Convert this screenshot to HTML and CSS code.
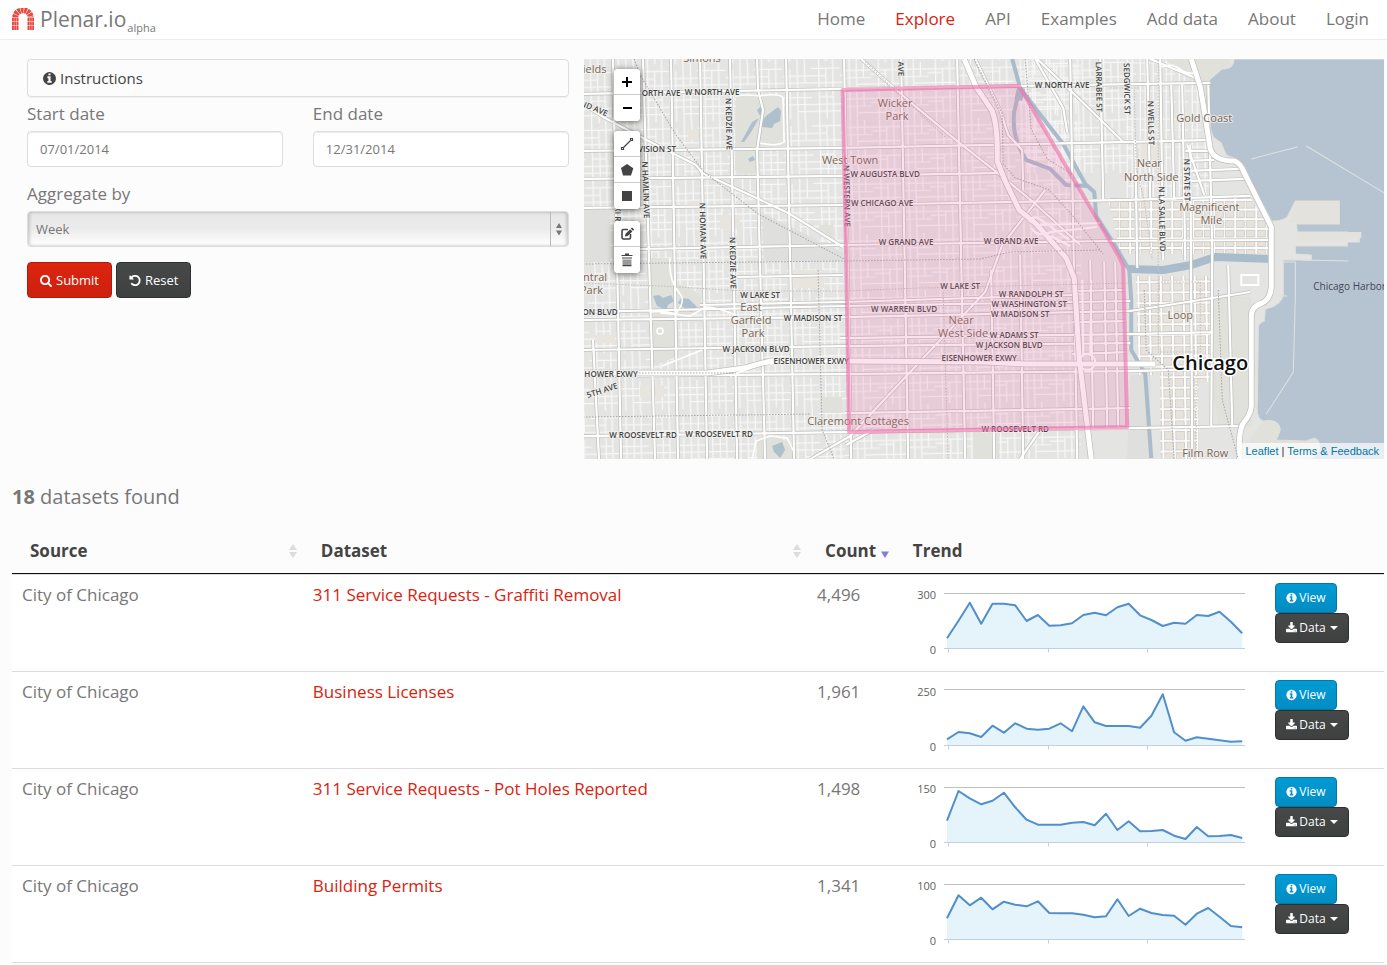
FILE: index.html
```html
<!DOCTYPE html>
<html lang="en">
<head>
<meta charset="utf-8">
<title>Plenar.io - Explore</title>
<link rel="stylesheet" href="styles.css">
</head>
<body>
<svg class="sprite" aria-hidden="true">
  <symbol id="i-info" viewBox="128 0 1536 1792"><path d="M1152 1376v-160q0-14-9-23t-23-9h-96v-512q0-14-9-23t-23-9h-320q-14 0-23 9t-9 23v160q0 14 9 23t23 9h96v320h-96q-14 0-23 9t-9 23v160q0 14 9 23t23 9h448q14 0 23-9t9-23zm-128-896v-160q0-14-9-23t-23-9h-192q-14 0-23 9t-9 23v160q0 14 9 23t23 9h192q14 0 23-9t9-23zm640 416q0 209-103 385.5t-279.5 279.5-385.5 103-385.5-103-279.5-279.5-103-385.5 103-385.5 279.5-279.5 385.5-103 385.5 103 279.5 279.5 103 385.5z"/></symbol>
  <symbol id="i-search" viewBox="64 0 1664 1792"><path d="M1216 832q0-185-131.5-316.5t-316.5-131.5-316.5 131.5-131.5 316.5 131.5 316.5 316.5 131.5 316.5-131.5 131.5-316.5zm512 832q0 52-38 90t-90 38q-54 0-90-38l-343-342q-179 124-399 124-143 0-273.5-55.5t-225-150-150-225-55.5-273.5 55.5-273.5 150-225 225-150 273.5-55.5 273.5 55.5 225 150 150 225 55.5 273.5q0 220-124 399l343 343q37 37 37 90z"/></symbol>
  <symbol id="i-undo" viewBox="128 0 1536 1792"><path d="M1664 896q0 156-61 298t-164 245-245 164-298 61q-172 0-327-72.5t-264-204.5q-7-10-6.5-22.5t8.5-20.5l137-138q10-9 25-9 16 2 23 12 73 95 179 147t225 52q104 0 198.5-40.5t163.5-109.5 109.5-163.5 40.5-198.5-40.5-198.5-109.5-163.5-163.5-109.5-198.5-40.5q-98 0-188 35.5t-160 101.5l137 138q31 30 14 69-17 40-59 40h-448q-26 0-45-19t-19-45v-448q0-42 40-59 39-17 69 14l130 129q107-101 244.5-156.5t284.5-55.5q156 0 298 61t245 164 164 245 61 298z"/></symbol>
  <symbol id="i-download" viewBox="64 0 1664 1792"><path d="M1344 1344q0-26-19-45t-45-19-45 19-19 45 19 45 45 19 45-19 19-45zm256 0q0-26-19-45t-45-19-45 19-19 45 19 45 45 19 45-19 19-45zm128-224v320q0 40-28 68t-68 28h-1472q-40 0-68-28t-28-68v-320q0-40 28-68t68-28h465l135 136q58 56 136 56t136-56l136-136h464q40 0 68 28t28 68zm-325-569q17 41-14 70l-448 448q-18 19-45 19t-45-19l-448-448q-31-29-14-70 17-39 59-39h256v-448q0-26 19-45t45-19h256q26 0 45 19t19 45v448h256q42 0 59 39z"/></symbol>
  <symbol id="axes" viewBox="-6 0 346 80"><path class="axis" d="M33 65.500H334M37.500 65.500v4M137.500 65.500v4M236.500 65.500v4"/></symbol>
</svg>

<header class="nav">
  <a class="brand" href="#">
    <svg class="logo" viewBox="0 0 22 22" aria-hidden="true">
      <path class="arch" d="M3.300 9.500A7.700 7.200 0 0 1 18.700 9.500"/>
      <path class="stones" d="M0 10h6.500v3H0zM15.500 10H22v3h-6.500zM0 13.500h6.500v3.500H0zM15.500 13.500H22V17h-6.500zM0 17.500h6.500V22H0zM15.500 17.500H22V22h-6.500z"/>
      <path class="joints" d="M2.200 10v12M4.500 10v12M17.700 10v12M20 10v12"/>
    </svg>
    <span class="brand-name">Plenar.io</span><sub class="brand-tag">alpha</sub>
  </a>
  <nav class="links">
    <a href="#">Home</a>
    <a href="#" class="active">Explore</a>
    <a href="#">API</a>
    <a href="#">Examples</a>
    <a href="#">Add data</a>
    <a href="#">About</a>
    <a href="#">Login</a>
  </nav>
</header>

<main class="page">
  <section class="explore">
    <form class="filters">
      <a class="panel" href="#"><svg class="icon-lg"><use href="#i-info"/></svg>Instructions</a>
      <div class="dates">
        <div class="field">
          <label for="start">Start date</label>
          <input class="control" id="start" type="text" value="07/01/2014">
        </div>
        <div class="field">
          <label for="end">End date</label>
          <input class="control" id="end" type="text" value="12/31/2014">
        </div>
      </div>
      <div class="field">
        <label for="agg">Aggregate by</label>
        <div class="select">
          <select id="agg"><option>Week</option></select>
          <svg class="stepper" viewBox="0 0 18 34" aria-hidden="true"><path class="split" d="M.500 0v34"/><path class="tri" d="M6 16l3-5 3 5zM6 18.500l3 5 3-5z"/></svg>
        </div>
      </div>
      <div class="actions">
        <button class="btn red" type="button"><svg class="icon"><use href="#i-search"/></svg>Submit</button>
        <button class="btn dark" type="button"><svg class="icon"><use href="#i-undo"/></svg>Reset</button>
      </div>
    </form>

    <div class="map">
      <svg class="tiles" viewBox="584 59 800 400" preserveAspectRatio="xMidYMid slice">
        <defs>
          <pattern id="west" width="57" height="57.500" patternUnits="userSpaceOnUse" patternTransform="matrix(1 -0.02 0.022 1 612 94)">
            <path class="minor" d="M7 0V29M14.500 0V57M21.500 0V29M36 0V57M43.500 0V29M50 0V57M7 36V57M22 29V50M43 36V57M0 7.500H29M0 14.500H57M14 21.500H57M28 36H57M0 43.500H43M0 50.500H57M36 7H50"/>
          </pattern>
          <pattern id="town" width="57" height="28.500" patternUnits="userSpaceOnUse" patternTransform="matrix(1 -0.02 0.022 1 901 148)">
            <path class="minor" d="M7 0V28M14 0V28M21 0V14M36 0V28M43 7V28M50 0V28M0 7H57M0 14.500H29M14 21H57M28 11H43"/>
          </pattern>
          <pattern id="loop" width="11.300" height="10.600" patternUnits="userSpaceOnUse" patternTransform="matrix(1 -0.01 0.015 1 1138 282)">
            <rect width="11.300" height="10.600" class="white"/>
            <rect x="1.500" y="1.500" width="8.500" height="8" class="block"/>
          </pattern>
          <pattern id="north" width="21" height="9.600" patternUnits="userSpaceOnUse" patternTransform="translate(1130 200)">
            <rect width="21" height="9.600" class="white"/>
            <rect x="1.500" y="1.500" width="7.500" height="6.800" class="block"/><rect x="11" y="1.500" width="8.500" height="6.800" class="block"/>
          </pattern>
          <pattern id="tall" width="13" height="28" patternUnits="userSpaceOnUse" patternTransform="translate(1136 84)">
            <path class="minor" d="M4 0V28M0 7H13M9 0V28M4 18H13"/>
          </pattern>
        </defs>
        <rect class="land" x="583" y="59" width="802" height="400"/>
        <rect fill="url(#west)" x="583" y="59" width="262" height="400"/>
        <rect fill="url(#town)" x="845" y="59" width="236" height="400"/>
        <rect fill="url(#west)" x="1020" y="59" width="112" height="114"/>
        <rect fill="url(#tall)" x="1126" y="59" width="84" height="140"/>
        <g class="sand">
          <path d="M688 130h14v10h-14zM720 215h20v14h-20zM790 270h34v18h-34zM640 385h24v12h-24zM1140 140h24v20h-24zM595 335h20v8h-20z"/>
        </g>
        <path class="rail-yard" d="M583 210h27v52h-27zM762 213l82 40v8h-80zM1130 375h20v84h-23z"/>
        <path fill="url(#loop)" d="M1136 276h76v106h-14v77h-38v-84h-22z"/>
        <path fill="url(#north)" d="M1108 198h142l20 30v26h-150z"/>
        <g class="park">
          <path d="M736 95q14-2 24 0 14-2 23 4l1 46q-5 6-24 1l-3 26q-16 6-22-2zM649 258h26l2 26 14 4q14 10 10 22l-20 8h-28zM652 318h26l1 38-26 10zM757 440l18-4 17 8 2 15h-37zM1165 59h64l3 8-22 12-3 20-10-16-22-12zM1210 297h41v130h-32l-8-40zM1264 419q14-3 14 8l40 2q6 12-8 16l-60 14-10-5zM819 225h14v12h-14zM820 397h22v16h-22zM973 430h26v29h-26z"/>
        </g>
        <path class="water" d="M1234 59q-1 11-12 10l-12 10q-7 14-3 40l6 18 8 6 5 12 12 5q7 5 12 20l22 42 1-1q9 0 14-4l8-16h44v23h-43l1 8h50v3h12v7h-12v4h-52v8l16 1v5h-28v35q-3 11-18 14l-1 12q-6 2-6 7v5l-1 72q-1 14 6 16 16-3 17 9l-4 10 30 1q14-8 13 8-3 9-12 10l-4 10h87V59z"/>
        <g class="river">
          <path d="M1012 59l8 29 18 24 25 32 22 40 9 8 2 24 18 28 15 26 2 30v50l14 24 6 84"/>
          <path d="M1019 90l-5 22q-3 26 12 48l24 9 16 16 22 1"/>
          <path d="M1128 269l35 1 28-5 24-8 58 2" class="wide"/>
          <path d="M1021 88l-3 12" class="wide"/>
        </g>
        <path class="pond" d="M761 122l5-6 12-9 3 4-1 10-6 3-2 4-10-1zM757 110l4-4 3 6-4 4zM741 142l11-20 7-4-8 14-7 10zM653 296l6-1 4 3 8-3 3 6-6 4-2 5-9-4zM681 298l8 1 8 8-6 5-8-5-5-4zM748 159l5-3 2 4-5 2zM772 446l10-4 3 8-5 8-6-6z"/>
        <g class="breakwater"><path d="M1251 159l46-12M1306 146l78 47M1271 262h24v36l-2 74-27 42M1301 260l47 1M1287 296h-10"/></g>
        <path class="pier" d="M1298 201h40v22h-50zM1297 233h50v9h-50zM1347 232h14v6h-14z"/>

        <g class="casing">
          <path id="streets" d="M583 94L843 89 1020 86 1210 83M583 151L843 148 1130 142 1212 140M583 179L843 176 1005 173M583 208L843 205 1130 200 1250 196M640 249L843 245 1105 241 1270 240M583 312L843 306 1130 301M583 320L843 317 1130 311 1250 292M840 338L1130 334 1212 332M583 350L843 346 1130 343M583 376L843 374 1130 371 1250 368M845 413L1130 408M583 436L845 432 1130 428 1238 426M737 277L843 275M700 305L843 302 1072 295
          M593 340L599 459M613 59L621 459M643 59L655 459M671 59L678 459M700 59L707 459M730 59L737 459M757 59L758 90 763 110 757 150 765 459M786 59L794 459M844 59L851 459M901 59L908 459M957 59L965 459M991 270L994 459M1020 255L1023 459M1070 59L1077 459M1100 59L1103 200M1135 140L1137 268M1147 59L1150 200M1160 59L1163 260M1171 85L1174 200M1182 84L1185 260M1190 145L1192 459M1208 85L1212 250 1211 427M1228 265L1232 427M1185 151L1214 151M1186 161L1214 160M1187 171L1240 169M1190 181L1246 179"/>
          <path id="diag" d="M583 104L603 117 660 147 696 165 702 173 750 195 790 214 843 247M861 59L898 92 958 142 1000 175 1033 202 1080 245M975 59L1000 110 1008 135 1022 150 1023 190M1037 59L1076 96 1122 141M1035 59L1063 108 1067 132M1045 190L1002 245 985 292 850 436 810 459M846 445L873 430M1040 430L1020 459M1150 59L1200 80M1187 145L1204 195"/>
          <path id="near-loop" d="M1090 260L1093 428M1104 262L1107 428M1115 262L1118 428M1072 291L1124 290M1072 322L1125 321M1072 354L1126 352"/>
        </g>
        <g class="roads"><use href="#streets"/><use href="#diag"/><use href="#near-loop"/></g>
        <path class="park-road" d="M650 312q14-2 26 2 10-14 4-20-12-14-10-36M736 315q-20-8-30-8l-16 9-30-3M735 96q14-2 24 0 22-3 24 2l1 44q-8 5-24 1M657 331a3 3 0 1 0 6 0 3 3 0 1 0-6 0M662 366l40-16M752 459l4-18 14-5 17 2 7 14"/>

        <path class="hwy-case" d="M964 59l12 28 16 24q6 16 5 50l8 20 14 29 17 14 30 34 8 20 5 80 12 101M583 373h125l36-5 26-7h75l140 1 40 2h130"/>
        <path class="hwy" d="M964 59l12 28 16 24q6 16 5 50l8 20 14 29 17 14 30 34 8 20 5 80 12 101M583 373h125l36-5 26-7h75l140 1 40 2h130"/>
        <path class="ramps" d="M1029 222q4-8 12-2l28 20M1031 228q6 10 20 4l46-5M1040 225l60-2M1050 236l20 10M1079 362a8 8 0 1 0 16 0 8 8 0 1 0-16 0M1082 280l1 76M1091 280l-1 76M730 376l30-12 24-2"/>
        <path class="hwy-case" d="M1191 59l9 28 4 24 6 38q4 12 24 12 6 2 10 12l27 54v60q-1 12-9 16-11 3-11 14v90q-1 8-8 16-5 8-4 36"/>
        <path class="hwy" d="M1191 59l9 28 4 24 6 38q4 12 24 12 6 2 10 12l27 54v60q-1 12-9 16-11 3-11 14v90q-1 8-8 16-5 8-4 36"/>
        <path class="tunnel" d="M1161 67q10-4 18 2t16 4M1241 275h17v10h-17z"/>

        <path class="rail" d="M583 264L843 261 980 259 1010 252 1100 250M634 59l6 16 36 60 28 37 54 42 86 45M583 417L810 414M974 59l15 30 13 25 1 50 12 14 34 12 22 24 32 40M1025 59l6 70 16 30 26 16M1144 290l2 60 22 20 6 89M1218 290l4 110 16 59M818 270l4 160 12 29M636 373h100"/>
        <path class="rail pink" d="M583 283L660 286 744 291 843 291 920 288 1130 283M943 292l5 167M1134 90l2 80 8 30 8 60M1110 88h30M1158 282h42v70h-42zM1158 60v280M1196 375v84M865 62l80 75"/>

        <g class="place">
          <text x="579" y="73">fields</text>
          <text x="702" y="62" class="mid">Simons</text>
          <text x="850" y="164" class="mid">West Town</text>
          <text x="895" y="107" class="mid">Wicker</text><text x="897" y="120" class="mid">Park</text>
          <text x="1204" y="122" class="mid">Gold Coast</text>
          <text x="1149" y="167" class="mid">Near</text><text x="1151" y="181" class="mid">North Side</text>
          <text x="1209" y="211" class="mid">Magnificent</text><text x="1211" y="224" class="mid">Mile</text>
          <text x="570" y="281">Central</text><text x="580" y="294">Park</text>
          <text x="751" y="311" class="mid">East</text><text x="751" y="324" class="mid">Garfield</text><text x="753" y="337" class="mid">Park</text>
          <text x="961" y="324" class="mid">Near</text><text x="963" y="337" class="mid">West Side</text>
          <text x="1180" y="319" class="mid">Loop</text>
          <text x="858" y="425" class="mid">Claremont Cottages</text>
          <text x="1205" y="457" class="mid">Film Row</text>
        </g>
        <g class="street">
          <text x="661" y="96" class="mid">ORTH AVE</text><text x="712" y="95" class="mid">W NORTH AVE</text>
          <text x="1062" y="88" class="mid">W NORTH AVE</text>
          <text x="657" y="152" class="mid">VISION ST</text>
          <text x="885" y="177" class="mid">W AUGUSTA BLVD</text>
          <text x="882" y="206" class="mid">W CHICAGO AVE</text>
          <text x="906" y="245" class="mid">W GRAND AVE</text><text x="1011" y="244" class="mid">W GRAND AVE</text>
          <text x="760" y="298" class="mid">W LAKE ST</text><text x="960" y="289" class="mid">W LAKE ST</text>
          <text x="813" y="321" class="mid">W MADISON ST</text><text x="904" y="312" class="mid">W WARREN BLVD</text>
          <text x="1031" y="297" class="mid">W RANDOLPH ST</text><text x="1029" y="307" class="mid">W WASHINGTON ST</text>
          <text x="1020" y="317" class="mid">W MADISON ST</text><text x="1014" y="338" class="mid">W ADAMS ST</text>
          <text x="1009" y="348" class="mid">W JACKSON BLVD</text><text x="756" y="352" class="mid">W JACKSON BLVD</text>
          <text x="811" y="364" class="mid">EISENHOWER EXWY</text><text x="979" y="361" class="mid">EISENHOWER EXWY</text>
          <text x="611" y="377" class="mid">HOWER EXWY</text><text x="600" y="315" class="mid">ON BLVD</text>
          <text x="643" y="438" class="mid">W ROOSEVELT RD</text><text x="719" y="437" class="mid">W ROOSEVELT RD</text><text x="1015" y="432" class="mid">W ROOSEVELT RD</text>
          <text class="mid" transform="translate(593 111) rotate(22)">ND AVE</text>
          <text class="mid" transform="translate(603 393) rotate(-18)">5TH AVE</text>
          <text class="mid" transform="translate(726 124) rotate(89)">N KEDZIE AVE</text>
          <text class="mid" transform="translate(730 263) rotate(89)">N KEDZIE AVE</text>
          <text class="mid" transform="translate(643 190) rotate(88)">N HAMLIN AVE</text>
          <text class="mid" transform="translate(700 231) rotate(89)">N HOMAN AVE</text>
          <text class="mid" transform="translate(615 214) rotate(89)">KI R</text>
          <text class="mid" transform="translate(844 196) rotate(89)">N WESTERN AVE</text>
          <text class="mid" transform="translate(898 69) rotate(89)">AVE</text>
          <text class="mid" transform="translate(1096 87) rotate(89)">LARRABEE ST</text>
          <text class="mid" transform="translate(1124 89) rotate(89)">SEDGWICK ST</text>
          <text class="mid" transform="translate(1148 123) rotate(89)">N WELLS ST</text>
          <text class="mid" transform="translate(1184 180) rotate(89)">N STATE ST</text>
          <text class="mid" transform="translate(1159 219) rotate(89)">N LA SALLE BLVD</text>
        </g>
        <text class="harbor" x="1313" y="290">Chicago Harbor</text>
        <text class="city mid" x="1210" y="370">Chicago</text>
        <path class="selection" d="M842.500 90L1019 86 1119 257 1123 266 1127 427 849 432 846 256z"/>
      </svg>

      <div class="tools">
        <div class="bar">
          <button type="button" class="tool" aria-label="Zoom in"><svg viewBox="0 0 26 26"><path class="thick" d="M8 13h10M13 8v10"/></svg></button>
          <button type="button" class="tool" aria-label="Zoom out"><svg viewBox="0 0 26 26"><path class="thick" d="M9 13h9"/></svg></button>
        </div>
        <div class="bar">
          <button type="button" class="tool" aria-label="Draw a line"><svg viewBox="0 0 26 26"><path class="thin" d="M9 17l8-8M7.500 16.500h2v2h-2zM16.500 7.500h2v2h-2z"/></svg></button>
          <button type="button" class="tool" aria-label="Draw a polygon"><svg viewBox="0 0 26 26"><path d="M13 7l6.300 4.300-2.300 7.200H9L7 11z"/></svg></button>
          <button type="button" class="tool" aria-label="Draw a rectangle"><svg viewBox="0 0 26 26"><path d="M8 8h10v10H8z"/></svg></button>
        </div>
        <div class="bar">
          <button type="button" class="tool" aria-label="Edit layers"><svg viewBox="0 0 26 26"><path class="mark" d="M14 8.500H9.500q-1.500 0-1.500 1.500v6.500q0 1.500 1.500 1.500H15q1.500 0 1.500-1.500V13"/><path d="M11 15.500l.500-2.700 4.700-4.600 2.200 2.200-4.700 4.600zM16.800 7.600l1.200-1.200 2.200 2.200-1.200 1.200z"/></svg></button>
          <button type="button" class="tool" aria-label="Delete layers"><svg viewBox="0 0 26 26"><path class="faded" d="M8.500 12.500h9V18h-9z"/><path d="M11 6.500h4v1.500h3.500v1h-11V8H11zM8 10.500h10v1H8zM8.500 18h9v1.200h-9z"/></svg></button>
        </div>
      </div>
      <div class="credit"><a href="#">Leaflet</a> | <a href="#">Terms &amp; Feedback</a></div>
    </div>
  </section>

  <h1 class="found"><strong>18</strong> datasets found</h1>

  <table class="datasets">
    <colgroup><col class="c-source"><col class="c-name"><col class="c-count"><col class="c-trend"><col class="c-act"></colgroup>
    <thead>
      <tr>
        <th><span class="head">Source<svg class="sort" viewBox="0 0 8 14"><path d="M0 6l4-6 4 6zM0 8l4 6 4-6z"/></svg></span></th>
        <th><span class="head">Dataset<svg class="sort" viewBox="0 0 8 14"><path d="M0 6l4-6 4 6zM0 8l4 6 4-6z"/></svg></span></th>
        <th><span class="head">Count<svg class="sort on" viewBox="0 0 8 14"><path d="M0 7.500h8l-4 6.500z"/></svg></span></th>
        <th>Trend</th>
        <th></th>
      </tr>
    </thead>
    <tbody>
      <tr>
        <td>City of Chicago</td>
        <td><a href="#">311 Service Requests - Graffiti Removal</a></td>
        <td>4,496</td>
        <td><svg class="chart" viewBox="-6 0 346 80">
          <path class="grid" d="M33 10.500H334"/>
          <polygon class="area" points="36,65 36,55.300 47.500,37.700 58.800,19.700 70.200,40.700 81.500,20.700 92.900,20.700 104.200,22.300 115.600,38 126.900,32 138.300,42.700 149.600,42.300 161,40.300 172.300,32 183.700,29.700 195,32.300 206.400,24.300 217.700,20.700 229.100,32.300 240.400,37 251.800,43 263.100,39.700 274.500,40.700 285.800,32 297.200,33 308.500,28.700 319.900,38.700 331.200,50.300 331.200,65"/>
          <use href="#axes" x="-6" width="346" height="80"/>
          <polyline class="line" points="36,55.300 47.500,37.700 58.800,19.700 70.200,40.700 81.500,20.700 92.900,20.700 104.200,22.300 115.600,38 126.900,32 138.300,42.700 149.600,42.300 161,40.300 172.300,32 183.700,29.700 195,32.300 206.400,24.300 217.700,20.700 229.100,32.300 240.400,37 251.800,43 263.100,39.700 274.500,40.700 285.800,32 297.200,33 308.500,28.700 319.900,38.700 331.200,50.300"/>
          <text class="tick" x="25" y="16">300</text><text class="tick" x="25" y="71">0</text>
        </svg></td>
        <td><div class="row-actions"><button type="button" class="btn sm blue"><svg class="icon"><use href="#i-info"/></svg>View</button><button type="button" class="btn sm dark"><svg class="icon"><use href="#i-download"/></svg>Data<span class="caret"></span></button></div></td>
      </tr>
      <tr>
        <td>City of Chicago</td>
        <td><a href="#">Business Licenses</a></td>
        <td>1,961</td>
        <td><svg class="chart" viewBox="-6 0 346 80">
          <path class="grid" d="M33 9.500H334"/>
          <polygon class="area" points="36,65 36,59.300 47.500,52 58.800,53.300 70.200,57 81.500,45.700 92.900,52.700 104.200,43.300 115.600,48.700 126.900,49.700 138.300,48.700 149.600,43.300 161,51.300 172.300,26.300 183.700,42.300 195,46 206.400,46 217.700,46 229.100,47.700 240.400,35.700 251.800,14.300 263.100,52.300 274.500,60.700 285.800,57.300 297.200,58.700 308.500,60.300 319.900,61.700 331.200,61.300 331.200,65"/>
          <use href="#axes" x="-6" width="346" height="80"/>
          <polyline class="line" points="36,59.300 47.500,52 58.800,53.300 70.200,57 81.500,45.700 92.900,52.700 104.200,43.300 115.600,48.700 126.900,49.700 138.300,48.700 149.600,43.300 161,51.300 172.300,26.300 183.700,42.300 195,46 206.400,46 217.700,46 229.100,47.700 240.400,35.700 251.800,14.300 263.100,52.300 274.500,60.700 285.800,57.300 297.200,58.700 308.500,60.300 319.900,61.700 331.200,61.300"/>
          <text class="tick" x="25" y="16">250</text><text class="tick" x="25" y="71">0</text>
        </svg></td>
        <td><div class="row-actions"><button type="button" class="btn sm blue"><svg class="icon"><use href="#i-info"/></svg>View</button><button type="button" class="btn sm dark"><svg class="icon"><use href="#i-download"/></svg>Data<span class="caret"></span></button></div></td>
      </tr>
      <tr>
        <td>City of Chicago</td>
        <td><a href="#">311 Service Requests - Pot Holes Reported</a></td>
        <td>1,498</td>
        <td><svg class="chart" viewBox="-6 0 346 80">
          <path class="grid" d="M33 10.500H334"/>
          <polygon class="area" points="36,65 36,43.700 47.500,14 58.800,21.300 70.200,27.300 81.500,23.700 92.900,15.700 104.200,30.300 115.600,42.700 126.900,47.700 138.300,47.700 149.600,47.700 161,45.700 172.300,45 183.700,48.300 195,36.700 206.400,53 217.700,44.300 229.100,54.300 240.400,54 251.800,53 263.100,58.700 274.500,62 285.800,50 297.200,59.300 308.500,59 319.900,58 331.200,61 331.200,65"/>
          <use href="#axes" x="-6" width="346" height="80"/>
          <polyline class="line" points="36,43.700 47.500,14 58.800,21.300 70.200,27.300 81.500,23.700 92.900,15.700 104.200,30.300 115.600,42.700 126.900,47.700 138.300,47.700 149.600,47.700 161,45.700 172.300,45 183.700,48.300 195,36.700 206.400,53 217.700,44.300 229.100,54.300 240.400,54 251.800,53 263.100,58.700 274.500,62 285.800,50 297.200,59.300 308.500,59 319.900,58 331.200,61"/>
          <text class="tick" x="25" y="16">150</text><text class="tick" x="25" y="71">0</text>
        </svg></td>
        <td><div class="row-actions"><button type="button" class="btn sm blue"><svg class="icon"><use href="#i-info"/></svg>View</button><button type="button" class="btn sm dark"><svg class="icon"><use href="#i-download"/></svg>Data<span class="caret"></span></button></div></td>
      </tr>
      <tr>
        <td>City of Chicago</td>
        <td><a href="#">Building Permits</a></td>
        <td>1,341</td>
        <td><svg class="chart" viewBox="-6 0 346 80">
          <path class="grid" d="M33 10.500H334"/>
          <polygon class="area" points="36,65 36,44.300 47.500,21.300 58.800,31.300 70.200,23.700 81.500,35.300 92.900,27.700 104.200,30.700 115.600,32.300 126.900,27.300 138.300,39 149.600,39.300 161,39.300 172.300,40.700 183.700,43.300 195,42.300 206.400,25.300 217.700,42 229.100,34.700 240.400,39 251.800,41 263.100,41.700 274.500,50.700 285.800,39.700 297.200,34 308.500,42.700 319.900,52 331.200,53.300 331.200,65"/>
          <use href="#axes" x="-6" width="346" height="80"/>
          <polyline class="line" points="36,44.300 47.500,21.300 58.800,31.300 70.200,23.700 81.500,35.300 92.900,27.700 104.200,30.700 115.600,32.300 126.900,27.300 138.300,39 149.600,39.300 161,39.300 172.300,40.700 183.700,43.300 195,42.300 206.400,25.300 217.700,42 229.100,34.700 240.400,39 251.800,41 263.100,41.700 274.500,50.700 285.800,39.700 297.200,34 308.500,42.700 319.900,52 331.200,53.300"/>
          <text class="tick" x="25" y="16">100</text><text class="tick" x="25" y="71">0</text>
        </svg></td>
        <td><div class="row-actions"><button type="button" class="btn sm blue"><svg class="icon"><use href="#i-info"/></svg>View</button><button type="button" class="btn sm dark"><svg class="icon"><use href="#i-download"/></svg>Data<span class="caret"></span></button></div></td>
      </tr>
    </tbody>
  </table>
</main>
</body>
</html>
```
FILE: styles.css
```css
*, *::before, *::after { box-sizing: border-box; }
body {
  margin: 0;
  background: #fcfcfc;
  color: #777;
  font: 17px/24px "Open Sans", sans-serif;
}
a { color: #d9230f; text-decoration: none; }
.sprite { position: absolute; width: 0; height: 0; }

/* Top bar */
.nav {
  display: flex;
  justify-content: space-between;
  align-items: center;
  height: 40px;
  padding: 0 18px 2px 12px;
  background: #fff;
  border-bottom: 1px solid #eee;
}
.brand { display: flex; align-items: center; color: #777; }
.logo { width: 22px; height: 22px; margin-right: 6px; }
.arch { fill: none; stroke: #e4493c; stroke-width: 6; stroke-dasharray: 2.6 .6; }
.stones { fill: #e4493c; }
.joints { fill: none; stroke: #fff; stroke-width: .4; }
.brand-name { font-size: 21px; }
.brand-tag { font-size: 11px; line-height: 12px; align-self: flex-end; margin: 0 0 -3px 1px; }
.links { display: flex; gap: 30px; }
.links a { color: #777; }
.links .active { color: #d9230f; }

.page { padding: 19px 3px 0 12px; }
.explore { display: grid; grid-template-columns: 5fr 7fr; }

/* Filters */
.filters { padding: 0 15px; }
.panel {
  display: flex;
  align-items: center;
  height: 38px;
  padding: 0 15px;
  color: #444;
  font-size: 15px;
  border: 1px solid #ddd;
  border-radius: 4px;
  box-shadow: 0 1px 1px rgba(0, 0, 0, .05);
}
.icon, .icon-lg { fill: currentColor; flex: none; }
.icon-lg { width: 13px; height: 15px; margin-right: 4px; }
.icon { width: 12px; height: 13px; margin-right: 4px; }
.dates { display: grid; grid-template-columns: 1fr 1fr; gap: 30px; margin-bottom: 15px; }
.dates .field { padding-top: 5px; }
.field label { display: block; margin-bottom: 5px; }
.control, .select select {
  display: block;
  width: 100%;
  height: 36px;
  padding: 0 12px;
  color: #777;
  font: 13px/18px "Open Sans", sans-serif;
  background: #fff;
  border: 1px solid #ddd;
  border-radius: 4px;
  box-shadow: inset 0 1px 1px rgba(0, 0, 0, .075);
}
.select { position: relative; }
.select select {
  appearance: none;
  padding: 0 8px;
  background: linear-gradient(#e6e6e6, #ececec 50%, #fff);
  box-shadow: inset 2px 0 3px rgba(0, 0, 0, .15), inset -2px 0 3px rgba(0, 0, 0, .15);
}
.stepper { position: absolute; right: 1px; top: 1px; width: 18px; height: 34px; pointer-events: none; }
.split { stroke: #bbb; }
.tri { fill: #777; }
.actions { display: flex; gap: 4px; margin-top: 15px; }
.btn {
  display: flex;
  align-items: center;
  height: 36px;
  padding: 0 12px;
  color: #fff;
  font: 13px/18px "Open Sans", sans-serif;
  border: 1px solid;
  border-radius: 4px;
}
.red { background: linear-gradient(#dd240f, #cc210e); border-color: #b01c0c; }
.dark { background: linear-gradient(#474948, #3f4140); border-color: #2e302f; }
.blue { background: linear-gradient(#029bd6, #028dc2); border-color: #0279a7; }
.sm { height: 30px; padding: 0 10px; font-size: 12px; }
.sm .icon { height: 12px; width: 11px; margin-right: 2px; }
.caret { margin-left: 4px; border: 4px solid transparent; border-top-color: #fff; border-bottom: 0; }

/* Map */
.map { position: relative; height: 400px; overflow: hidden; background: #e4e4e3; }
.tiles { display: block; width: 100%; height: 100%; }
.land { fill: #e4e4e3; }
.minor { fill: none; stroke: #f8f8f8; stroke-width: 1.2; }
.white { fill: #fff; }
.block { fill: #e7e3dc; stroke: #c6c4bf; stroke-width: .7; }
.sand { fill: #e8e5de; }
.rail-yard { fill: #dfdfde; }
.park { fill: #dfe1da; }
.water { fill: #b6c4d1; stroke: #dfe1da; stroke-width: 1; }
.pond { fill: #aebfce; }
.river { fill: none; stroke: #a9bccb; stroke-width: 4; stroke-linejoin: round; }
.river .wide { stroke-width: 8; }
.breakwater { fill: none; stroke: #dfe2e2; stroke-width: 1; }
.pier { fill: #e3e2dc; }
.casing { fill: none; stroke: #bfbfbc; stroke-width: 3.6; }
.roads { fill: none; stroke: #fff; stroke-width: 2.2; }
.park-road { fill: none; stroke: #fff; stroke-width: 1.6; }
.hwy-case { fill: none; stroke: #c0c0be; stroke-width: 6.5; stroke-linejoin: round; }
.hwy { fill: none; stroke: #fff; stroke-width: 5; stroke-linejoin: round; }
.ramps { fill: none; stroke: #fff; stroke-width: 2; }
.tunnel { fill: none; stroke: #fff; stroke-width: 2; }
.rail { fill: none; stroke: #a6a6a6; stroke-width: 1; stroke-dasharray: 1.5 1.5; }
.rail.pink { stroke: #c9bdb8; }
.mid { text-anchor: middle; }
.place, .street, .harbor, .city { paint-order: stroke; stroke: rgba(240, 240, 238, .8); stroke-width: 2px; stroke-linejoin: round; }
.place { fill: #7a6555; font-size: 11px; }
.street { fill: #444; font-size: 8px; font-weight: 600; }
.harbor { fill: #445; font-size: 10px; stroke: none; }
.city { fill: #111; font-size: 20px; font-weight: 600; stroke: #fff; stroke-width: 3px; }
.selection { fill: #f06eaa; fill-opacity: .2; stroke: #f06eaa; stroke-opacity: .6; stroke-width: 4; stroke-linejoin: round; }
.tools { position: absolute; left: 30px; top: 10px; display: flex; flex-direction: column; gap: 10px; }
.bar { overflow: hidden; border-radius: 4px; background: #fff; box-shadow: 0 1px 6px rgba(0, 0, 0, .6); }
.bar:last-child { margin-top: 2px; }
.tool { display: block; width: 26px; height: 26px; padding: 0; background: #fff; border: 0; }
.tool:not(:last-child) { border-bottom: 1px solid #ccc; }
.tool svg { display: block; width: 26px; height: 26px; fill: #444; }
.tool .thick { stroke: #000; stroke-width: 2; }
.tool .thin { fill: #fff; stroke: #444; stroke-width: 1.2; }
.tool .mark { fill: none; stroke: #444; stroke-width: 1.6; }
.tool .faded { fill: #999; }
.credit {
  position: absolute;
  right: 0;
  bottom: 0;
  padding: 0 5px;
  color: #333;
  font: 11px/16px "Liberation Sans", Arial, sans-serif;
  background: rgba(255, 255, 255, .7);
}
.credit a { color: #0078a8; }

/* Results */
.found { margin: 24px 0 22px; font-size: 20px; line-height: 28px; font-weight: 400; }
.datasets { width: 100%; table-layout: fixed; border-spacing: 0; }
.c-source { width: 21.2%; }
.c-name { width: 36.75%; }
.c-count { width: 6.4%; }
.c-trend { width: 27%; }
.c-act { width: 8.65%; }
.datasets th {
  padding: 6px 6px 10px 18px;
  color: #444;
  font-weight: 700;
  text-align: left;
  border-bottom: 1px solid #111;
}
.head { display: flex; align-items: center; justify-content: space-between; }
.sort { width: 8px; height: 14px; fill: #ddd; }
.sort.on { fill: #7f7fdf; }
.datasets td { padding: 8px 10px; vertical-align: top; background: #fff; border-top: 1px solid #ddd; }
.datasets tbody tr:last-child td { border-bottom: 1px solid #ddd; }
.chart { display: block; width: 346px; height: 80px; }
.grid { stroke: #c0c0c0; }
.axis { fill: none; stroke: #c0d0e0; }
.area { fill: #e5f3fb; }
.line { fill: none; stroke: #518fcb; stroke-width: 2; stroke-linejoin: round; }
.tick { fill: #606060; font-size: 11px; text-anchor: end; }
.row-actions { display: flex; flex-direction: column; align-items: flex-start; }
```
